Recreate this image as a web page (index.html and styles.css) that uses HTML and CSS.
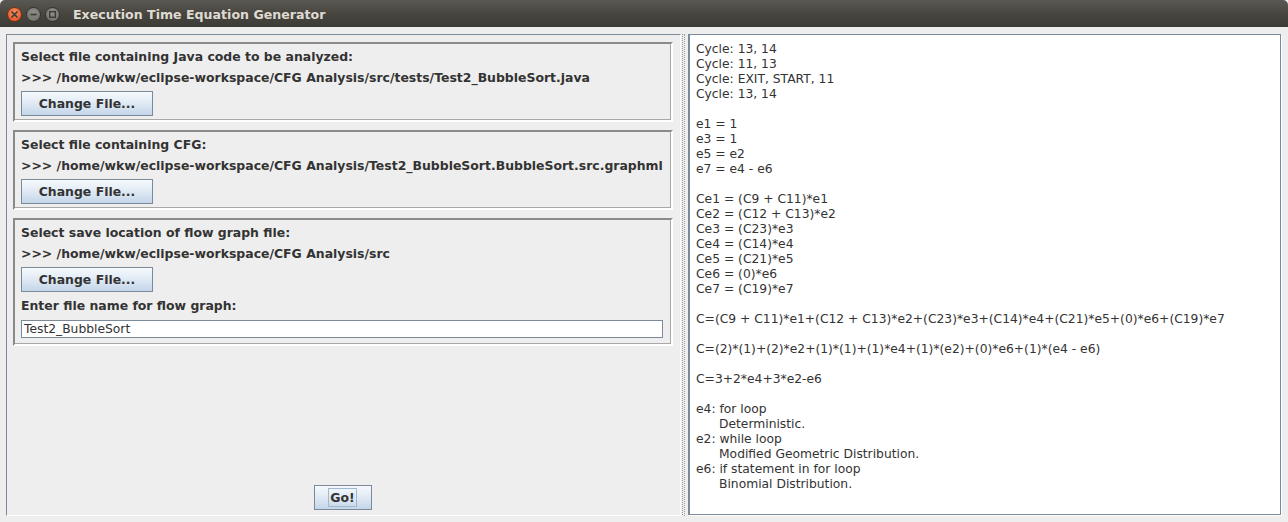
FILE: index.html
```html
<!DOCTYPE html>
<html>
<head>
<meta charset="utf-8">
<link rel="stylesheet" href="styles.css">
</head>
<body>
<div class="window">
  <div class="titlebar">
    <div class="wbtns">
      <span class="wbtn close"><svg width="15" height="15" viewBox="0 0 15 15"><path d="M5 5 L10 10 M10 5 L5 10" stroke="#3c3b37" stroke-width="1.7" stroke-linecap="round"/></svg></span>
      <span class="wbtn"><svg width="15" height="15" viewBox="0 0 15 15"><path d="M4.5 7.5 H10.5" stroke="#3c3b37" stroke-width="1.7"/></svg></span>
      <span class="wbtn"><svg width="15" height="15" viewBox="0 0 15 15"><rect x="4.7" y="4.7" width="5.6" height="5.6" fill="none" stroke="#3c3b37" stroke-width="1.4"/></svg></span>
    </div>
    <div class="title">Execution Time Equation Generator</div>
  </div>
  <div class="content">
    <div class="left">
      <div class="group">
        <div class="label">Select file containing Java code to be analyzed:</div>
        <div class="label">&gt;&gt;&gt; /home/wkw/eclipse-workspace/CFG Analysis/src/tests/Test2_BubbleSort.java</div>
        <div class="btn">Change File...</div>
      </div>
      <div class="group">
        <div class="label">Select file containing CFG:</div>
        <div class="label">&gt;&gt;&gt; /home/wkw/eclipse-workspace/CFG Analysis/Test2_BubbleSort.BubbleSort.src.graphml</div>
        <div class="btn">Change File...</div>
      </div>
      <div class="group last">
        <div class="label">Select save location of flow graph file:</div>
        <div class="label">&gt;&gt;&gt; /home/wkw/eclipse-workspace/CFG Analysis/src</div>
        <div class="btn">Change File...</div>
        <div class="label label-after">Enter file name for flow graph:</div>
        <div class="field">Test2_BubbleSort</div>
      </div>
      <div class="spacer"></div>
      <div class="gorow"><div class="btn gobtn"><span class="focus">Go!</span></div></div>
    </div>
    <div class="divider"></div>
    <div class="right">
<div class="ln">Cycle: 13, 14</div>
<div class="ln">Cycle: 11, 13</div>
<div class="ln">Cycle: EXIT, START, 11</div>
<div class="ln">Cycle: 13, 14</div>
<div class="ln"></div>
<div class="ln">e1 = 1</div>
<div class="ln">e3 = 1</div>
<div class="ln">e5 = e2</div>
<div class="ln">e7 = e4 - e6</div>
<div class="ln"></div>
<div class="ln">Ce1 = (C9 + C11)*e1</div>
<div class="ln">Ce2 = (C12 + C13)*e2</div>
<div class="ln">Ce3 = (C23)*e3</div>
<div class="ln">Ce4 = (C14)*e4</div>
<div class="ln">Ce5 = (C21)*e5</div>
<div class="ln">Ce6 = (0)*e6</div>
<div class="ln">Ce7 = (C19)*e7</div>
<div class="ln"></div>
<div class="ln">C=(C9 + C11)*e1+(C12 + C13)*e2+(C23)*e3+(C14)*e4+(C21)*e5+(0)*e6+(C19)*e7</div>
<div class="ln"></div>
<div class="ln">C=(2)*(1)+(2)*e2+(1)*(1)+(1)*e4+(1)*(e2)+(0)*e6+(1)*(e4 - e6)</div>
<div class="ln"></div>
<div class="ln">C=3+2*e4+3*e2-e6</div>
<div class="ln"></div>
<div class="ln">e4: for loop</div>
<div class="ln ind">Deterministic.</div>
<div class="ln">e2: while loop</div>
<div class="ln ind">Modified Geometric Distribution.</div>
<div class="ln">e6: if statement in for loop</div>
<div class="ln ind">Binomial Distribution.</div>
    </div>
  </div>
</div>
</body>
</html>
```
FILE: styles.css
```css
* { box-sizing: border-box; }
html, body { margin: 0; padding: 0; }
body {
  width: 1288px;
  height: 522px;
  background: #eeeeee;
  font-family: "DejaVu Sans", "Liberation Sans", sans-serif;
  overflow: hidden;
}
.window { width: 1288px; height: 522px; display: flex; flex-direction: column; }
.titlebar {
  height: 27px;
  flex: none;
  background: linear-gradient(to bottom, #5a5852 0%, #48463f 50%, #3c3b37 100%);
  border-radius: 5px 5px 0 0;
  display: flex;
  align-items: center;
  padding-left: 7px;
  padding-top: 2px;
}
.wbtns { display: flex; gap: 4px; align-items: center; }
.wbtn {
  width: 15px; height: 15px;
  border-radius: 50%;
  background: radial-gradient(circle at 50% 35%, #92908a, #6c6a64);
  border: 1px solid #34332f;
  display: flex; align-items: center; justify-content: center;
}
.wbtn svg { display: block; margin: -1px; }
.wbtn.close { background: radial-gradient(circle at 50% 35%, #f7905f, #e04a1d); border-color: #7a2e14; }
.title {
  margin-left: 13px;
  color: #dfdbd2;
  font-weight: bold;
  font-size: 12.6px;
}
.content {
  flex: 1;
  display: flex;
  padding: 7px 6px 6px 6px;
}
.left {
  width: 675px;
  flex: none;
  border-top: 1px solid #7a8a99;
  border-left: 1px solid #7a8a99;
  border-bottom: 1px solid #ffffff;
  border-right: 1px solid #ffffff;
  padding: 7px 7px 0 6px;
  display: flex;
  flex-direction: column;
  gap: 8px;
}
.group {
  border-top: 2px solid #8a8a8a;
  border-left: 2px solid #8a8a8a;
  border-bottom: 2px solid #ffffff;
  border-right: 2px solid #ffffff;
  box-shadow: inset -1px -1px 0 #a8a8a8;
  padding: 2px 6px 4px 6px;
  display: flex;
  flex-direction: column;
  align-items: flex-start;
}
.group.last { padding-bottom: 6px; }
.label {
  font-size: 12.45px;
  font-weight: bold;
  color: #333333;
  line-height: 21px;
  height: 21px;
  white-space: nowrap;
}
.label-after { margin-top: 3px; }
.btn {
  margin-top: 3px;
  width: 132px;
  height: 25px;
  border: 1px solid #7a8a99;
  background: linear-gradient(to bottom, #f6f9fc 0%, #e2ebf5 45%, #c4d6e9 100%);
  font-size: 12.45px;
  font-weight: bold;
  color: #333333;
  display: flex;
  align-items: center;
  justify-content: center;
}
.field {
  margin-top: 4px;
  width: 642px;
  height: 18px;
  background: #ffffff;
  border: 1px solid #7a8a99;
  font-size: 12.3px;
  color: #333333;
  line-height: 16px;
  padding-left: 2px;
}
.spacer { flex: 1; }
.gorow { display: flex; justify-content: center; margin-bottom: 5px; margin-left: -1px; }
.gobtn { width: 58px; margin-top: 0; }
.focus {
  border: 1px solid #a3b8cc;
  padding: 1px 1px;
  line-height: 15px;
}
.divider {
  width: 7px;
  flex: none;
  display: flex;
  justify-content: center;
}
.divider::before {
  content: "";
  display: block;
  width: 2px;
  margin-left: -2px;
  background-image: linear-gradient(to bottom, #9a9a9a 50%, transparent 50%);
  background-size: 1px 2px;
  background-repeat: repeat-y;
  border-right: 1px dotted #9a9a9a;
}
.right {
  flex: 1;
  background: #ffffff;
  border: 1px solid #7a8a99;
  border-left: 2px solid #7a8a99;
  box-shadow: 1px 1px 0 #ffffff;
  padding: 7px 6px;
  margin-right: 1px;
  margin-bottom: 1px;
}
.ln {
  font-size: 12.3px;
  color: #333333;
  line-height: 15px;
  height: 15px;
  white-space: nowrap;
}
.ind { padding-left: 23px; }
```
